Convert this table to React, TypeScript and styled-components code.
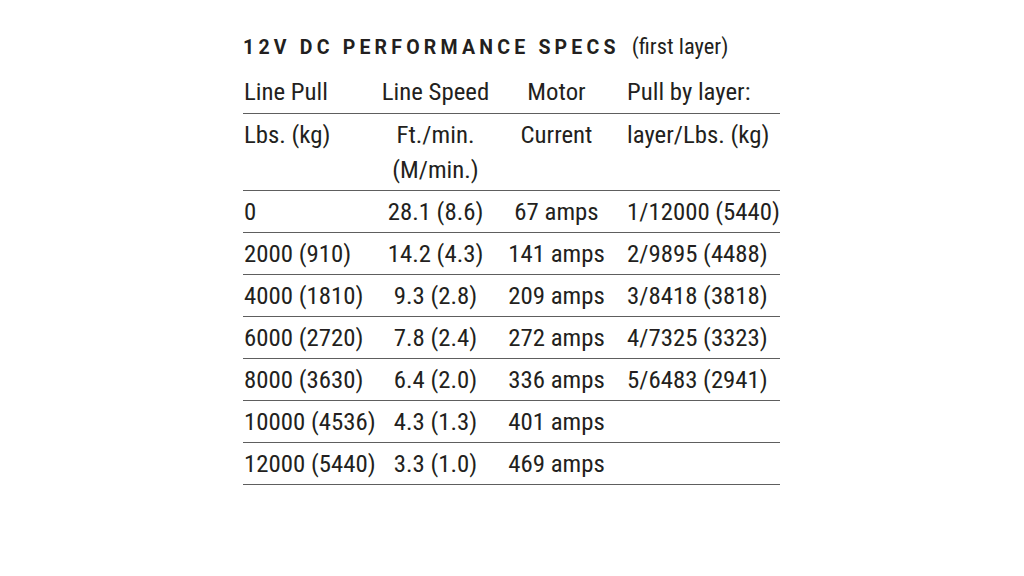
import styled, { createGlobalStyle } from 'styled-components';

const GlobalStyle = createGlobalStyle`
  html, body {
    margin: 0;
    padding: 0;
    background: #ffffff;
  }
`;

const Page = styled.div`
  width: 1024px;
  height: 576px;
  padding: 33px 0 0 243px;
  box-sizing: border-box;
  color: #231f20;
  font-family: Roboto, "Open Sans", sans-serif;
  font-stretch: 75%;
`;

const Title = styled.div`
  display: flex;
  align-items: baseline;
  height: 38px;
  line-height: 26px;
`;

const TitleMain = styled.span`
  font-stretch: 100%;
  font-weight: 700;
  font-size: 19.5px;
  letter-spacing: 4.2px;
  margin-right: 12px;
`;

const TitleNote = styled.span`
  font-size: 22.5px;
  font-weight: 390;
`;

const Table = styled.table`
  width: 537px;
  border-collapse: collapse;
  table-layout: fixed;
  font-size: 24.8px;
  font-weight: 390;
`;

const Cell = styled.td<{ $align?: 'left' | 'center' | 'indent' }>`
  box-sizing: border-box;
  height: 42px;
  padding: 0 0 0 ${(p) => (p.$align === 'indent' ? '5px' : '1px')};
  line-height: 35px;
  text-align: ${(p) => (p.$align === 'center' ? 'center' : 'left')};
  white-space: nowrap;
  border-bottom: 1.5px solid #5e5e5e;
  vertical-align: middle;
`;

const SubHead = styled(Cell)`
  vertical-align: top;
  height: 77px;
  padding-top: 3px;
`;

type Row = [string, string, string, string];

const rows: Row[] = [
  ['0', '28.1 (8.6)', '67 amps', '1/12000 (5440)'],
  ['2000 (910)', '14.2 (4.3)', '141 amps', '2/9895 (4488)'],
  ['4000 (1810)', '9.3 (2.8)', '209 amps', '3/8418 (3818)'],
  ['6000 (2720)', '7.8 (2.4)', '272 amps', '4/7325 (3323)'],
  ['8000 (3630)', '6.4 (2.0)', '336 amps', '5/6483 (2941)'],
  ['10000 (4536)', '4.3 (1.3)', '401 amps', ''],
  ['12000 (5440)', '3.3 (1.0)', '469 amps', ''],
];

function App() {
  return (
    <Page>
      <GlobalStyle />
      <Title>
        <TitleMain>12V DC PERFORMANCE SPECS</TitleMain>
        <TitleNote>(first layer)</TitleNote>
      </Title>
      <Table>
        <colgroup>
          <col style={{ width: 137 }} />
          <col style={{ width: 110 }} />
          <col style={{ width: 132 }} />
          <col style={{ width: 158 }} />
        </colgroup>
        <tbody>
          <tr>
            <Cell>Line Pull</Cell>
            <Cell $align="center">Line Speed</Cell>
            <Cell $align="center">Motor</Cell>
            <Cell $align="indent">Pull by layer:</Cell>
          </tr>
          <tr>
            <SubHead>Lbs. (kg)</SubHead>
            <SubHead $align="center">
              Ft./min.
              <br />
              (M/min.)
            </SubHead>
            <SubHead $align="center">Current</SubHead>
            <SubHead $align="indent">layer/Lbs. (kg)</SubHead>
          </tr>
          {rows.map((r, i) => (
            <tr key={i}>
              <Cell>{r[0]}</Cell>
              <Cell $align="center">{r[1]}</Cell>
              <Cell $align="center">{r[2]}</Cell>
              <Cell $align="indent">{r[3]}</Cell>
            </tr>
          ))}
        </tbody>
      </Table>
    </Page>
  );
}

export default App;
